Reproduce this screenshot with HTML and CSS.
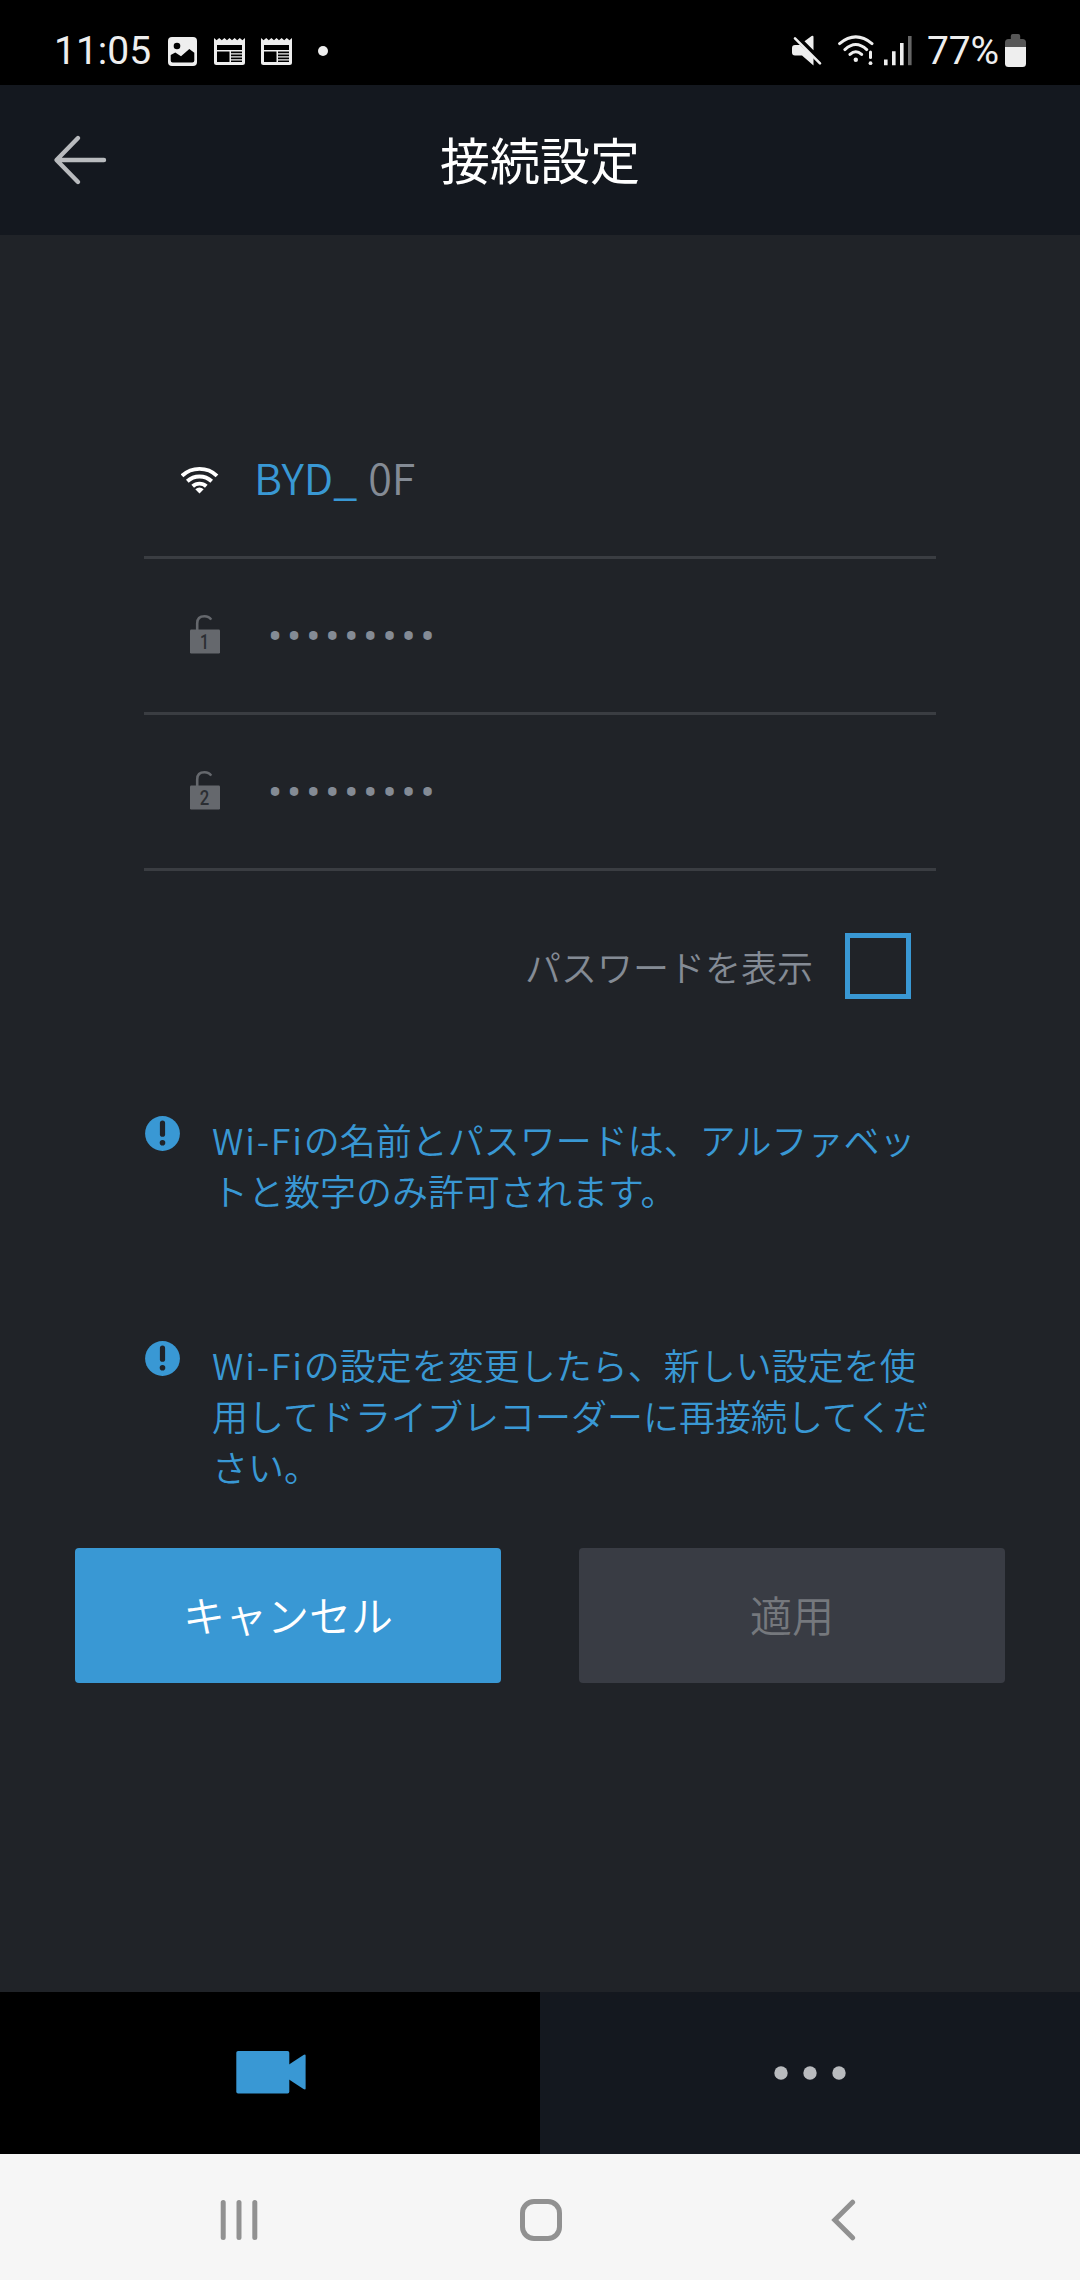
FILE: index.html
```html
<!DOCTYPE html>
<html lang="ja">
<head>
<meta charset="utf-8">
<title>接続設定</title>
<link rel="stylesheet" href="styles.css">
</head>
<body>
<div class="screen">
  <div class="status">
    <span class="clock">11:05</span>
    <svg class="st-image" width="29" height="29" viewBox="168 37 29 29">
      <rect x="168" y="37" width="29" height="29" rx="4" fill="#eee"/>
      <circle cx="177" cy="46" r="3.3" fill="#000"/>
      <path d="M170.7 55L175.3 52.5L181 56.2L189.3 49L194.3 52.8V60.5Q194.3 62.5 192.3 62.5H172.7Q170.7 62.5 170.7 60.5Z" fill="#000"/>
    </svg>
    <svg class="st-news" width="31" height="28" viewBox="0 0 31 28">
      <path d="M0 0L2.6 2.2L5.2 0L7.8 2.2L10.4 0L13 2.2L15.5 0L18 2.2L20.6 0L23.2 2.2L25.8 0L28.4 2.2L31 0V24.5Q31 27 28.5 27H2.5Q0 27 0 24.5Z" fill="#eee"/>
      <path d="M3 7H28V12H3ZM3 13.5H15.5V24H3ZM17 13.5H28V15.3H17ZM17 16.5H28V18.3H17ZM17 19.5H28V21.3H17ZM17 22.5H28V24H17Z" fill="#000"/>
    </svg>
    <svg class="st-news" width="31" height="28" viewBox="0 0 31 28">
      <path d="M0 0L2.6 2.2L5.2 0L7.8 2.2L10.4 0L13 2.2L15.5 0L18 2.2L20.6 0L23.2 2.2L25.8 0L28.4 2.2L31 0V24.5Q31 27 28.5 27H2.5Q0 27 0 24.5Z" fill="#eee"/>
      <path d="M3 7H28V12H3ZM3 13.5H15.5V24H3ZM17 13.5H28V15.3H17ZM17 16.5H28V18.3H17ZM17 19.5H28V21.3H17ZM17 22.5H28V24H17Z" fill="#000"/>
    </svg>
    <span class="st-dot"></span>
    <svg class="st-mute" width="32" height="32" viewBox="791 35 32 32">
      <path d="M795 45H800L813.5 57V65.5L802 55.5H795Q792 55.5 792 52.5V48Q792 45 795 45ZM804.5 41.3L811.6 36Q813.5 35 813.5 37V50.3Z" fill="#eee"/>
      <path d="M795 38.3L820 63.3" stroke="#eee" stroke-width="2.6" stroke-linecap="round"/>
    </svg>
    <svg class="st-wifi" width="37" height="32" viewBox="837 35 37 32" fill="none" stroke="#eee" stroke-width="3" stroke-linecap="round">
      <path d="M839.6 43.6Q855.8 30.2 872 43.6M844.9 49.6Q855.8 39.5 866.7 49.6M850 54.4Q855.8 49 861.6 54.4"/>
      <path d="M870.5 52V57.5"/>
      <circle cx="855.8" cy="59.7" r="2.2" fill="#eee" stroke="none"/>
      <circle cx="870.5" cy="63.2" r="1.9" fill="#eee" stroke="none"/>
    </svg>
    <svg class="st-signal" width="29" height="31" viewBox="883 35 29 31">
      <path d="M884 59.5h3.6v5.7h-3.6zM892 51.3h3.6v13.9h-3.6zM900 43h3.6v22.2h-3.6z" fill="#eee"/>
      <path d="M908 36h3.6v29.2h-3.6z" fill="#666"/>
    </svg>
    <span class="percent">77%</span>
    <svg class="st-battery" width="21" height="33" viewBox="1005 34 21 33">
      <path d="M1005 47V42.5Q1005 39 1008.5 39H1010.8V36Q1010.8 34 1012.8 34H1018.2Q1020.2 34 1020.2 36V39H1022.5Q1026 39 1026 42.5V47Z" fill="#575757"/>
      <path d="M1005 47H1026V63.5Q1026 67 1022.5 67H1008.5Q1005 67 1005 63.5Z" fill="#eee"/>
    </svg>
  </div>

  <div class="header">
    <svg class="back" width="56" height="52" viewBox="52 134 56 52" fill="none" stroke="#b9bbbe" stroke-width="4.4" stroke-linecap="round" stroke-linejoin="round">
      <path d="M78 138L56.5 160L78 182M57 160H104"/>
    </svg>
    <h1 class="title">接続設定</h1>
  </div>

  <div class="content">
    <div class="form">
      <div class="row">
        <svg class="row-wifi" width="38" height="28" viewBox="181 466 38 28" fill="none" stroke="#fff" stroke-width="3.9">
          <path d="M182 475.8A25.5 25.5 0 0 1 217 475.8M187.3 481.2A18 18 0 0 1 211.7 481.2M192.7 486.3A10 10 0 0 1 206.3 486.3"/>
          <path d="M195.3 489.2Q199.5 485.6 203.7 489.2L199.5 493.4Z" fill="#fff" stroke="none"/>
        </svg>
        <span class="ssid"><span class="prefix">BYD_</span><span class="suffix">0F</span></span>
      </div>
      <div class="row">
        <svg class="row-lock" width="30" height="40" viewBox="0 0 30 40">
          <path d="M7.2 16V9.5Q7.2 2.2 14.5 2.2Q19 2.2 21.2 5.6" fill="none" stroke="#65686d" stroke-width="2.6"/>
          <rect y="15.5" width="30" height="24" rx="1.2" fill="#65686d"/>
          <text x="14.5" y="35" class="lock-no" textLength="9" lengthAdjust="spacingAndGlyphs">1</text>
        </svg>
        <span class="dots">•••••••••</span>
      </div>
      <div class="row">
        <svg class="row-lock" width="30" height="40" viewBox="0 0 30 40">
          <path d="M7.2 16V9.5Q7.2 2.2 14.5 2.2Q19 2.2 21.2 5.6" fill="none" stroke="#65686d" stroke-width="2.6"/>
          <rect y="15.5" width="30" height="24" rx="1.2" fill="#65686d"/>
          <text x="14.5" y="35" class="lock-no" textLength="9.5" lengthAdjust="spacingAndGlyphs">2</text>
        </svg>
        <span class="dots">•••••••••</span>
      </div>
    </div>

    <div class="show-pw">
      <span class="show-label">パスワードを表示</span>
      <span class="checkbox"></span>
    </div>

    <div class="notice notice-first">
      <svg class="info" width="36" height="36" viewBox="0 0 36 36">
        <circle cx="18.5" cy="17.5" r="17.4" fill="#3998d4"/>
        <path d="M18.5 7V18.2" stroke="#202328" stroke-width="5.2" stroke-linecap="round"/>
        <circle cx="18.5" cy="26.8" r="2.8" fill="#202328"/>
      </svg>
      <p class="notice-text"><span class="latin">Wi-Fi</span>の名前とパスワードは、アルファベッ<br>トと数字のみ許可されます。</p>
    </div>
    <div class="notice notice-second">
      <svg class="info" width="36" height="36" viewBox="0 0 36 36">
        <circle cx="18.5" cy="17.5" r="17.4" fill="#3998d4"/>
        <path d="M18.5 7V18.2" stroke="#202328" stroke-width="5.2" stroke-linecap="round"/>
        <circle cx="18.5" cy="26.8" r="2.8" fill="#202328"/>
      </svg>
      <p class="notice-text"><span class="latin">Wi-Fi</span>の設定を変更したら、新しい設定を使<br>用してドライブレコーダーに再接続してくだ<br>さい。</p>
    </div>

    <div class="actions">
      <button class="btn btn-cancel">キャンセル</button>
      <button class="btn btn-apply" disabled>適用</button>
    </div>
  </div>

  <div class="tabs">
    <div class="tab tab-active">
      <svg class="camera" width="70" height="43" viewBox="236 2051 70 43" fill="#3998d4">
        <rect x="236.3" y="2051" width="53" height="42.5" rx="1.8"/>
        <path d="M289 2064.5L303.5 2054.9Q305.6 2053.8 305.6 2055.5V2088.5Q305.6 2090.2 303.5 2089L289 2079.5Z"/>
      </svg>
    </div>
    <div class="tab">
      <svg class="more" width="72" height="14" viewBox="0 0 72 14" fill="#b9bbbe">
        <circle cx="7" cy="7" r="6.7"/><circle cx="36" cy="7" r="6.7"/><circle cx="65" cy="7" r="6.7"/>
      </svg>
    </div>
  </div>

  <div class="navbar">
    <svg class="nav-recents" width="38" height="40" viewBox="220 2200 38 40" stroke="#919191" stroke-width="5" stroke-linecap="round">
      <path d="M223.2 2202.5V2237.5M239 2202.5V2237.5M254.8 2202.5V2237.5"/>
    </svg>
    <svg class="nav-home" width="42" height="42" viewBox="0 0 42 42">
      <rect x="2.5" y="2.5" width="37" height="37" rx="11.5" fill="none" stroke="#919191" stroke-width="5"/>
    </svg>
    <svg class="nav-back" width="26" height="42" viewBox="830 2199 26 42" fill="none" stroke="#919191" stroke-width="5" stroke-linecap="round">
      <path d="M852.6 2202.2L834.8 2220L852.6 2237.8"/>
    </svg>
  </div>
</div>
</body>
</html>
```

FILE: styles.css
```css
* { box-sizing: border-box; }
body {
  margin: 0;
  background: #202328;
  font-family: "Noto Sans CJK JP", sans-serif;
}
svg { display: block; flex: none; }
.screen {
  width: 1080px;
  height: 2280px;
  display: flex;
  flex-direction: column;
  overflow: hidden;
}

.status {
  height: 85px;
  flex: none;
  display: flex;
  align-items: flex-start;
  padding: 34px 54px 0 54px;
  background: #000;
  color: #eee;
  font-family: Roboto, sans-serif;
  font-size: 39px;
  line-height: 34px;
}
.clock { width: 114px; white-space: nowrap; }
.st-image { margin-top: 3px; }
.st-news { margin-top: 4px; margin-left: 17px; }
.st-news + .st-news { margin-left: 16px; }
.st-dot {
  width: 10px;
  height: 10px;
  margin: 12px 0 0 26px;
  border-radius: 50%;
  background: #eee;
}
.st-mute { margin: 1px 0 0 auto; }
.st-wifi { margin: 1px 0 0 14px; }
.st-signal { margin: 1px 0 0 9px; }
.percent {
  width: 78px;
  margin-left: 15px;
  white-space: nowrap;
  letter-spacing: -0.2px;
}

.header {
  height: 150px;
  flex: none;
  display: grid;
  grid-template-columns: 56px 1fr 56px;
  align-items: center;
  padding: 0 52px;
  background: #14181f;
}
.title {
  margin: 0 0 4px;
  color: #fff;
  font-size: 50px;
  line-height: 74px;
  font-weight: 400;
  text-align: center;
}

.content { flex: 1; padding-top: 168px; }
.form { margin: 0 144px; }
.row {
  height: 156px;
  display: flex;
  align-items: flex-start;
  border-bottom: 3px solid #3a3d42;
}
.row-wifi { margin: 63px 0 0 37px; }
.row-lock { margin: 55px 0 0 46px; }
.lock-no {
  font: 500 20px Roboto, sans-serif;
  fill: #2b2e33;
  text-anchor: middle;
}
.ssid {
  margin: 41px 0 0 35px;
  font-size: 43px;
  line-height: 64px;
  font-weight: 350;
  white-space: nowrap;
}
.prefix { color: #3998d4; }
.suffix { margin-left: 11px; color: #848b95; }
.dots {
  margin: 58px 0 0 48px;
  color: #848b95;
  font-family: Roboto, sans-serif;
  font-size: 42px;
  line-height: 40px;
  letter-spacing: 4.9px;
}

.show-pw {
  display: flex;
  justify-content: flex-end;
  align-items: center;
  gap: 32px;
  margin: 62px 169px 0 0;
}
.show-label {
  color: #848b95;
  font-size: 36px;
  line-height: 52px;
  font-weight: 350;
}
.checkbox { width: 66px; height: 66px; border: 5px solid #3998d4; }

.notice {
  display: flex;
  gap: 32px;
  margin-left: 144px;
}
.notice-first { margin-top: 115px; height: 225px; }
.notice-second { height: 209px; }
.info { margin-top: 2px; }
.notice-text {
  margin: 0;
  color: #3998d4;
  font-size: 36px;
  line-height: 51px;
  font-weight: 350;
  white-space: nowrap;
}
.latin { letter-spacing: 1.8px; }

.actions { display: flex; gap: 78px; padding: 0 75px; }
.btn {
  flex: 1;
  height: 135px;
  padding: 0 0 5px;
  border: 0;
  border-radius: 4px;
  font-family: inherit;
  font-size: 42px;
  font-weight: 350;
}
.btn-cancel { background: #3998d4; color: #fff; }
.btn-apply { background: #393c44; color: #75787d; }

.tabs {
  display: grid;
  grid-template-columns: 540px 540px;
  flex: none;
  height: 162px;
  background: #14181f;
}
.tab { display: flex; align-items: center; justify-content: center; }
.tab-active { background: #000; padding: 0 0 2px 2px; }

.navbar {
  height: 126px;
  flex: none;
  display: grid;
  grid-template-columns: 300px 262px 1fr;
  align-items: center;
  padding: 6px 0 0 220px;
  background: #f6f6f6;
}
.nav-back { margin-left: 48px; }
```
